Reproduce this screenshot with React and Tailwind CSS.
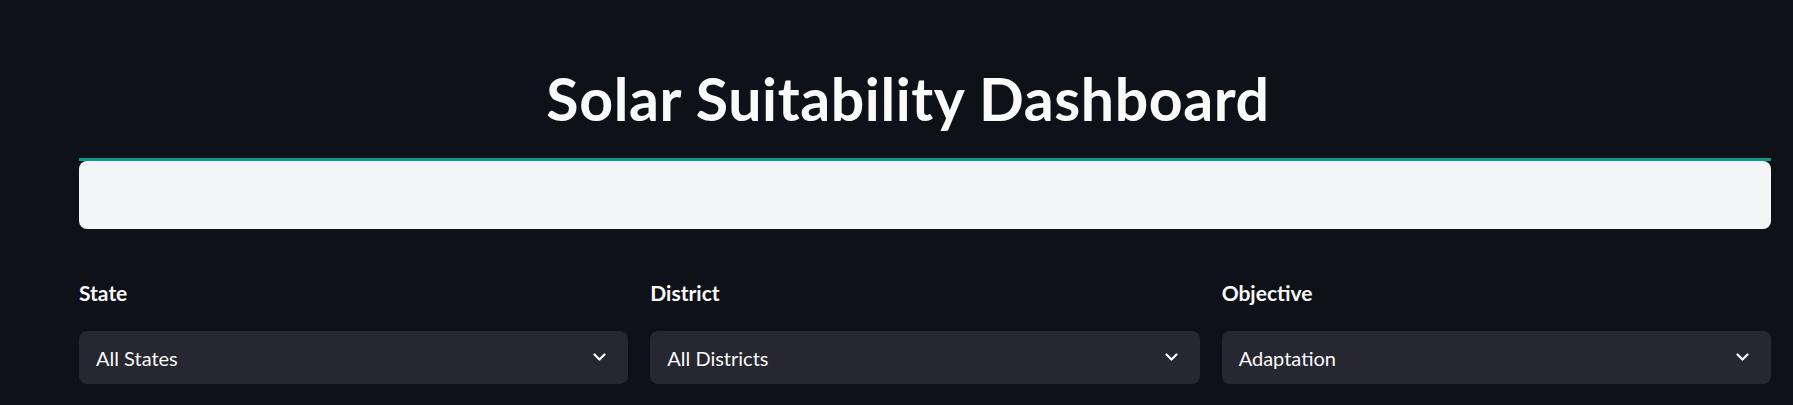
import React from 'react';

const filters = [
  { label: 'State', value: 'All States' },
  { label: 'District', value: 'All Districts' },
  { label: 'Objective', value: 'Adaptation' },
];

function Chevron() {
  return (
    <svg width="13" height="9" viewBox="0 0 13 9" fill="none" className="shrink-0">
      <path d="M1.5 1.5 L6.5 6.5 L11.5 1.5" stroke="#fafafa" strokeWidth="2.2" strokeLinecap="round" strokeLinejoin="round" />
    </svg>
  );
}

export default function App() {
  return (
    <div
      className="w-full h-[405px] bg-[#0e1117] text-[#fafafa] pl-[79px] pr-[22px] overflow-hidden"
      style={{ fontFamily: 'Lato, "Noto Sans", sans-serif' }}
    >
      <div className="h-[158px] flex justify-center pt-[69px] pr-[34px]">
        <h1 className="text-[59px] leading-none font-bold tracking-[0.6px]">Solar Suitability Dashboard</h1>
      </div>
      <div className="h-[3px] bg-[#0b9a8a]" />
      <div className="h-[68px] bg-[#f4f5f9] rounded-lg" />

      <div className="grid grid-cols-3 gap-[22px] mt-[52px]">
        {filters.map(f => (
          <div key={f.label} className="flex flex-col">
            <label className="text-[21px] leading-[24px] font-bold h-[50px]">{f.label}</label>
            <div className="h-[53px] bg-[#262730] rounded-lg flex items-center justify-between pl-[17px] pr-[22px]">
              <span className="text-[20px]">{f.value}</span>
              <Chevron />
            </div>
          </div>
        ))}
      </div>
    </div>
  );
}
